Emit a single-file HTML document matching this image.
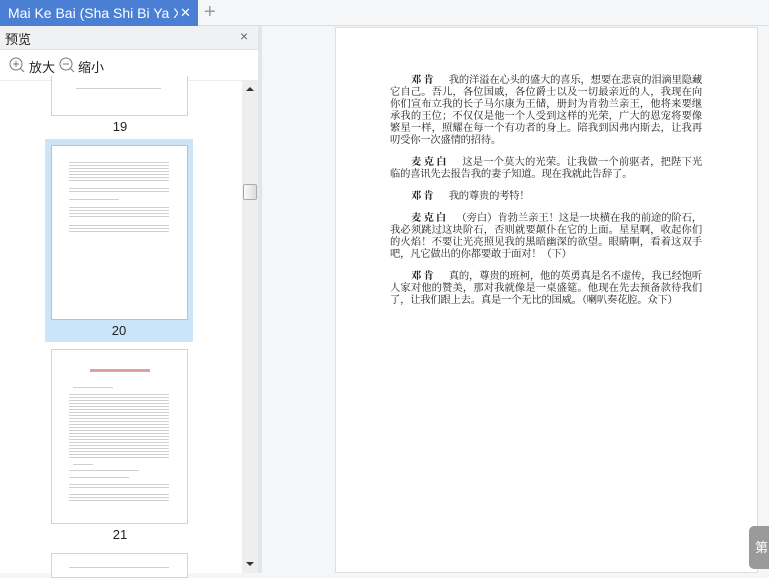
<!DOCTYPE html>
<html><head><meta charset="utf-8"><style>
*{margin:0;padding:0;box-sizing:border-box}
body{width:769px;height:573px;overflow:hidden;background:#f5f6f8;font-family:"Liberation Sans","Noto Sans CJK SC",sans-serif;position:relative}
.abs{position:absolute}
.tabbar{left:0;top:0;width:769px;height:26px;background:#f5f6f7;border-bottom:1px solid #dcdde0}
.tab{left:0;top:0;width:198px;height:26px;background:#4a7fd4;color:#fff;font-size:14px;line-height:26px}
.side{left:0;top:26px;width:259px;height:547px;background:#fff}
.lines{background:repeating-linear-gradient(#fff 0 1px,#d0d0d0 1px 2px,#fff 2px 3px);}
.thumb{background:#fff;border:1px solid #d4d4d4}
.txt{left:390px;width:312px;font-family:"Liberation Serif","Noto Serif CJK SC",serif;font-size:10.3px;letter-spacing:-0.2px;line-height:12px;color:#222;text-align:justify}
.txt p{text-indent:21px;margin-bottom:10px}
.txt b{font-weight:bold;letter-spacing:2px;margin-right:3px}
</style></head><body>
<div class="abs tabbar"></div>
<div class="abs tab"><span style="position:absolute;left:8px;top:0;width:170px;overflow:hidden;white-space:nowrap">Mai Ke Bai (Sha Shi Bi Ya Xi J</span><span style="position:absolute;left:180px;top:0;font-size:13px">✕</span></div>
<div class="abs" style="left:204px;top:1px;font-size:20px;color:#999;line-height:22px">+</div>

<div class="abs side"></div>
<div class="abs" style="left:0;top:26px;width:259px;height:24px;background:#f0f1f2;border-bottom:1px solid #e0e0e0"></div>
<div class="abs" style="left:5px;top:29px;font-size:13px;color:#222">预览</div>
<div class="abs" style="left:240px;top:28px;font-size:14px;color:#666">×</div>
<div class="abs" style="left:0;top:80px;width:259px;height:1px;background:#ececec"></div>
<svg class="abs" style="left:9px;top:57px" width="16" height="16"><circle cx="7" cy="7" r="6" fill="none" stroke="#777" stroke-width="1"/><path d="M4 7h6M7 4v6M11.5 11.5l3.5 3.5" stroke="#777" stroke-width="1"/></svg>
<div class="abs" style="left:29px;top:57px;font-size:13px;color:#222">放大</div>
<svg class="abs" style="left:59px;top:57px" width="16" height="16"><circle cx="7" cy="7" r="6" fill="none" stroke="#777" stroke-width="1"/><path d="M4 7h6M11.5 11.5l3.5 3.5" stroke="#777" stroke-width="1"/></svg>
<div class="abs" style="left:78px;top:57px;font-size:13px;color:#222">缩小</div>

<div class="abs thumb" style="left:51px;top:76px;width:137px;height:40px;border-top:none"></div>
<div class="abs lines" style="left:76px;top:87px;width:85px;height:3px"></div>
<div class="abs" style="left:0;top:119px;width:240px;text-align:center;font-size:13px;color:#222">19</div>

<div class="abs" style="left:45px;top:139px;width:148px;height:203px;background:#cce4f7"></div>
<div class="abs thumb" style="left:51px;top:145px;width:137px;height:175px;border-color:#a9c6e0"></div>
<div class="abs lines" style="left:69px;top:161px;width:100px;height:21px"></div>
<div class="abs lines" style="left:69px;top:187px;width:100px;height:6px"></div>
<div class="abs lines" style="left:69px;top:198px;width:50px;height:3px"></div>
<div class="abs lines" style="left:69px;top:206px;width:100px;height:12px"></div>
<div class="abs lines" style="left:69px;top:224px;width:100px;height:9px"></div>
<div class="abs" style="left:45px;top:323px;width:148px;text-align:center;font-size:13px;color:#222">20</div>

<div class="abs thumb" style="left:51px;top:349px;width:137px;height:175px"></div>
<div class="abs" style="left:90px;top:369px;width:60px;height:3px;background:#e0a0a0"></div>
<div class="abs lines" style="left:73px;top:386px;width:40px;height:3px"></div>
<div class="abs lines" style="left:69px;top:393px;width:100px;height:66px"></div>
<div class="abs lines" style="left:73px;top:463px;width:20px;height:3px"></div>
<div class="abs lines" style="left:69px;top:469px;width:70px;height:3px"></div>
<div class="abs lines" style="left:69px;top:476px;width:60px;height:3px"></div>
<div class="abs lines" style="left:69px;top:483px;width:100px;height:6px"></div>
<div class="abs lines" style="left:69px;top:493px;width:100px;height:9px"></div>
<div class="abs" style="left:0;top:527px;width:240px;text-align:center;font-size:13px;color:#222">21</div>
<div class="abs thumb" style="left:51px;top:553px;width:137px;height:25px"></div>
<div class="abs lines" style="left:69px;top:566px;width:100px;height:3px"></div>

<div class="abs" style="left:242px;top:81px;width:16px;height:492px;background:#eeeeee"></div>
<div class="abs" style="left:246px;top:87px;width:0;height:0;border-left:4px solid transparent;border-right:4px solid transparent;border-bottom:4px solid #333"></div>
<div class="abs" style="left:243px;top:184px;width:14px;height:16px;background:linear-gradient(90deg,#fafafa,#ddd);border:1px solid #aaa;border-radius:2px"></div>
<div class="abs" style="left:246px;top:562px;width:0;height:0;border-left:4px solid transparent;border-right:4px solid transparent;border-top:4px solid #333"></div>
<div class="abs" style="left:258px;top:26px;width:4px;height:547px;background:#e4e5e7"></div>

<div class="abs" style="left:335px;top:27px;width:423px;height:546px;background:#fff;border:1px solid #dedede"></div>
<div class="abs txt" style="top:75px">
<p><b>邓肯</b>　我的洋溢在心头的盛大的喜乐，想要在悲哀的泪滴里隐藏它自己。吾儿，各位国戚，各位爵士以及一切最亲近的人，我现在向你们宣布立我的长子马尔康为王储，册封为肯勃兰亲王，他将来要继承我的王位；不仅仅是他一个人受到这样的光荣，广大的恩宠将要像繁星一样，照耀在每一个有功者的身上。陪我到因弗内斯去，让我再叨受你一次盛情的招待。</p>
<p><b>麦克白</b>　这是一个莫大的光荣。让我做一个前驱者，把陛下光临的喜讯先去报告我的妻子知道。现在我就此告辞了。</p>
<p><b>邓肯</b>　我的尊贵的考特！</p>
<p><b>麦克白</b>　（旁白）肯勃兰亲王！这是一块横在我的前途的阶石，我必须跳过这块阶石，否则就要颠仆在它的上面。星星啊，收起你们的火焰！不要让光亮照见我的黑暗幽深的欲望。眼睛啊，看着这双手吧，凡它做出的你都要敢于面对！（下）</p>
<p><b>邓肯</b>　真的，尊贵的班柯，他的英勇真是名不虚传，我已经饱听人家对他的赞美，那对我就像是一桌盛筵。他现在先去预备款待我们了，让我们跟上去。真是一个无比的国威。（喇叭奏花腔。众下）</p>
</div>
<div class="abs" style="left:749px;top:526px;width:24px;height:43px;background:#9a9a9a;border-radius:5px 0 0 5px;color:#fff;font-size:13px;line-height:43px;padding-left:6px">第</div>
</body></html>
